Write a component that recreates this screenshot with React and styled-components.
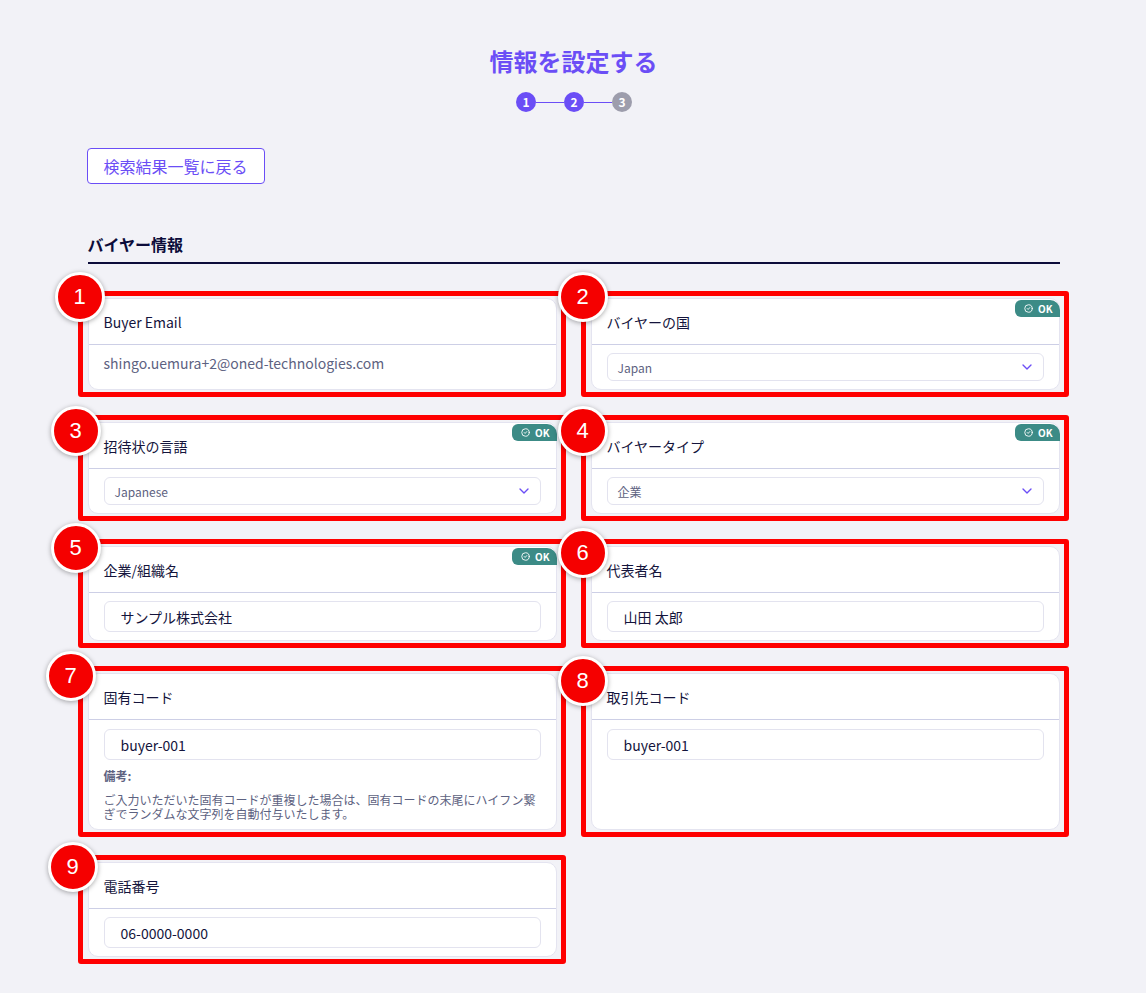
import React from "react";
import styled, { createGlobalStyle } from "styled-components";

const GlobalStyle = createGlobalStyle`
  html, body { margin: 0; padding: 0; background: #f2f2f7; }
  body { font-family: "Noto Sans CJK JP", "Noto Sans", sans-serif; color: #14143c; }
  * { box-sizing: border-box; }
`;

const Page = styled.div`
  min-height: 993px;
  padding: 45px 0 40px 1px;
`;

const Container = styled.div`
  width: 972px;
  margin: 0 auto;
`;

const Title = styled.h1`
  margin: 0;
  text-align: center;
  font-size: 24px;
  line-height: 32px;
  font-weight: 700;
  color: #6b4ef6;
`;

const Stepper = styled.div`
  display: flex;
  justify-content: center;
  align-items: center;
  margin-top: 15px;
  padding-left: 1px;
`;

const StepDot = styled.div`
  width: 20px;
  height: 20px;
  border-radius: 50%;
  background: ${(p) => (p.$active ? "#6b4ef6" : "#9d9dac")};
  color: #fff;
  font-size: 12px;
  font-weight: 700;
  display: flex;
  align-items: center;
  justify-content: center;
  line-height: 1;
`;

const StepLine = styled.div`
  width: 28px;
  height: 1px;
  background: #6b4ef6;
`;

const BackButton = styled.button`
  margin-top: 36px;
  margin-left: -1px;
  height: 36px;
  padding: 0 16px;
  border: 1px solid #6b4ef6;
  border-radius: 4px;
  background: #fff;
  color: #6b4ef6;
  font-family: inherit;
  font-size: 16px;
  cursor: pointer;
`;

const SectionHeading = styled.h2`
  margin: 48px 0 0;
  font-size: 16px;
  line-height: 24px;
  font-weight: 700;
  color: #0c0c3a;
  padding-bottom: 6px;
  border-bottom: 2px solid #0c0c3a;
`;

const Grid = styled.div`
  margin-top: 34px;
  display: grid;
  grid-template-columns: 469px 469px;
  column-gap: 34px;
  row-gap: 32px;
`;

const Slot = styled.div`
  position: relative;
  display: flex;
`;

const Card = styled.div`
  position: relative;
  flex: 1;
  background: #fff;
  border: 1px solid #e4e4f0;
  border-radius: 10px;
  display: flex;
  flex-direction: column;
`;

const CardHeader = styled.div`
  height: 46px;
  padding: 0 15px;
  display: flex;
  align-items: center;
  border-bottom: 1px solid #cdcfe6;
  font-size: 14px;
  color: #14143c;
`;

const CardBody = styled.div`
  padding: ${(p) => p.$pad || "8px 15px 8px"};
  flex: 1;
`;

const PlainValue = styled.div`
  font-size: 14px;
  line-height: 24px;
  color: #5d6281;
`;

const SelectBox = styled.div`
  height: 28px;
  border: 1px solid #e3e3ef;
  border-radius: 6px;
  padding: 0 8px 0 10px;
  display: flex;
  align-items: center;
  justify-content: space-between;
  font-size: 12px;
  color: #5d6281;
`;

const InputBox = styled.div`
  height: 31px;
  border: 1px solid #e3e3ef;
  border-radius: 6px;
  padding: 0 16px;
  display: flex;
  align-items: center;
  font-size: 14px;
  color: #14143c;
`;

const NoteTitle = styled.div`
  margin-top: 8px;
  font-size: 12px;
  line-height: 16px;
  font-weight: 700;
  color: #5d6281;
`;

const NoteText = styled.div`
  margin-top: 9px;
  font-size: 12px;
  line-height: 14px;
  color: #5d6281;
`;

const OkTag = styled.div`
  position: absolute;
  top: 1px;
  right: -1px;
  height: 17px;
  padding: 0 7px 0 9px;
  display: flex;
  align-items: center;
  gap: 5px;
  background: #3c8b86;
  color: #fff;
  font-size: 10px;
  font-weight: 700;
  border-radius: 6px 10px 0 6px;
`;

const Frame = styled.div`
  position: absolute;
  top: -7px;
  left: -10px;
  right: -9px;
  bottom: -7px;
  border: 5px solid #ff0000;
  border-radius: 3px;
  pointer-events: none;
`;

const NumBadge = styled.div`
  position: absolute;
  width: 50px;
  height: 50px;
  border-radius: 50%;
  background: #f50000;
  border: 3px solid #fff;
  box-shadow: 0 1px 5px rgba(0, 0, 0, 0.35);
  color: #fff;
  font-family: "Liberation Sans", Arial, sans-serif;
  font-size: 22px;
  display: flex;
  align-items: center;
  justify-content: center;
  z-index: 2;
`;

const Chevron = () => (
  <svg width="16" height="16" viewBox="0 0 24 24" fill="none" stroke="#6b4ef6" strokeWidth="2" strokeLinecap="round" strokeLinejoin="round">
    <path d="m6 9 6 6 6-6" />
  </svg>
);

const CheckCircle = () => (
  <svg width="9" height="9" viewBox="0 0 24 24" fill="none" stroke="#fff" strokeWidth="2.4" strokeLinecap="round" strokeLinejoin="round">
    <circle cx="12" cy="12" r="10" />
    <path d="m8.5 12 2.5 2.5 4.5-5" />
  </svg>
);

const Field = ({ n, bx, by, label, ok, children, pad }) => (
  <Slot>
    <Card>
      {ok && (
        <OkTag>
          <CheckCircle />
          OK
        </OkTag>
      )}
      <CardHeader>{label}</CardHeader>
      <CardBody $pad={pad}>{children}</CardBody>
    </Card>
    <Frame />
    <NumBadge style={{ left: bx - 25, top: by - 25 }}>{n}</NumBadge>
  </Slot>
);

export default function App() {
  return (
    <>
      <GlobalStyle />
      <Page>
        <Container>
          <Title>情報を設定する</Title>
          <Stepper>
            <StepDot $active>1</StepDot>
            <StepLine />
            <StepDot $active>2</StepDot>
            <StepLine />
            <StepDot>3</StepDot>
          </Stepper>
          <BackButton>検索結果一覧に戻る</BackButton>
          <SectionHeading>バイヤー情報</SectionHeading>
          <Grid>
            <Field n="1" bx={-8} by={-1} label="Buyer Email" pad="6px 15px 14px">
              <PlainValue>shingo.uemura+2@oned-technologies.com</PlainValue>
            </Field>
            <Field n="2" bx={-8} by={-1} label="バイヤーの国" ok>
              <SelectBox>
                Japan
                <Chevron />
              </SelectBox>
            </Field>
            <Field n="3" bx={-12} by={9} label="招待状の言語" ok>
              <SelectBox>
                Japanese
                <Chevron />
              </SelectBox>
            </Field>
            <Field n="4" bx={-8} by={9} label="バイヤータイプ" ok>
              <SelectBox>
                企業
                <Chevron />
              </SelectBox>
            </Field>
            <Field n="5" bx={-12} by={2} label="企業/組織名" ok>
              <InputBox>サンプル株式会社</InputBox>
            </Field>
            <Field n="6" bx={-8} by={7} label="代表者名">
              <InputBox>山田 太郎</InputBox>
            </Field>
            <Field n="7" bx={-17} by={3} label="固有コード" pad="9px 15px 8px">
              <InputBox>buyer-001</InputBox>
              <NoteTitle>備考:</NoteTitle>
              <NoteText>
                ご入力いただいた固有コードが重複した場合は、固有コードの末尾にハイフン繋
                <br />
                ぎでランダムな文字列を自動付与いたします。
              </NoteText>
            </Field>
            <Field n="8" bx={-8} by={8} label="取引先コード" pad="9px 15px 8px">
              <InputBox>buyer-001</InputBox>
            </Field>
            <Field n="9" bx={-15} by={5} label="電話番号">
              <InputBox>06-0000-0000</InputBox>
            </Field>
          </Grid>
        </Container>
      </Page>
    </>
  );
}
